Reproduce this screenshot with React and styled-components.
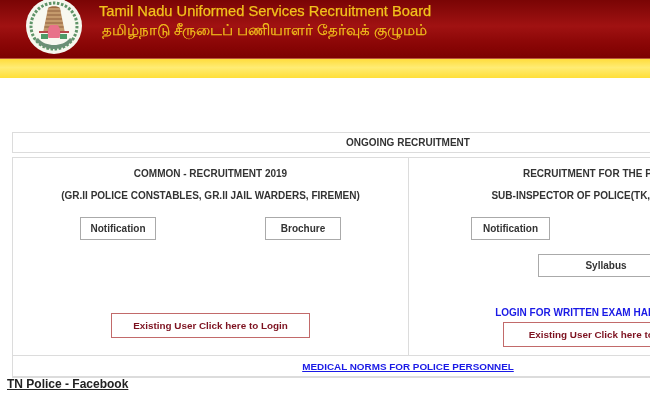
import styled, { createGlobalStyle } from "styled-components";

const GlobalStyle = createGlobalStyle`
  html, body {
    margin: 0;
    padding: 0;
    background: #ffffff;
  }
  body {
    font-family: "Liberation Sans", Arial, sans-serif;
  }
`;

const Page = styled.div`
  width: 650px;
  height: 400px;
  overflow: hidden;
  background: #ffffff;
  filter: blur(0.45px);
`;

const Header = styled.header`
  box-sizing: border-box;
  height: 59px;
  display: flex;
  align-items: flex-start;
  gap: 17px;
  padding-left: 26px;
  border-bottom: 1px solid #b9553a;
  background: linear-gradient(180deg, #7a0505 0%, #a01212 45%, #8e0808 70%, #7c0000 100%);
`;

const HeaderText = styled.div`
  padding-top: 3px;
  color: #f2c21c;
  -webkit-text-stroke: 0.25px #f2c21c;
`;

const BoardName = styled.div`
  font-size: 14.7px;
  line-height: 17px;
  white-space: nowrap;
`;

const BoardNameTamil = styled.div`
  font-size: 14.65px;
  line-height: 20px;
  padding-left: 3px;
  white-space: nowrap;
`;

const YellowBar = styled.div`
  height: 19px;
  background: linear-gradient(180deg, #ffdc3c 0%, #ffec74 45%, #ffdf38 100%);
`;

const Content = styled.main`
  width: 792px;
  margin: 54px 0 0 12px;
`;

const HeadingBox = styled.div`
  height: 19px;
  border: 1px solid #dcdcdc;
  display: flex;
  align-items: center;
  justify-content: center;
  color: #333333;
  font-size: 10px;
  font-weight: bold;
`;

const Panel = styled.div`
  margin-top: 4px;
  border: 1px solid #dcdcdc;
  border-bottom-width: 2px;
`;

const Columns = styled.div`
  display: grid;
  grid-template-columns: 395px 1fr;
  height: 197px;
  border-bottom: 1px solid #dcdcdc;
`;

const Column = styled.section`
  display: flex;
  flex-direction: column;
  align-items: center;
  padding-top: 10px;
  border-left: ${(p) => (p.$divided ? "1px solid #dcdcdc" : "none")};
`;

const ColumnTitle = styled.div`
  color: #333333;
  font-size: 10px;
  font-weight: bold;
  line-height: 12px;
  margin-bottom: 10px;
  margin-right: ${(p) => p.$shift || 0}px;
  white-space: nowrap;
`;

const ButtonRow = styled.div`
  width: 100%;
  box-sizing: border-box;
  display: flex;
  justify-content: space-between;
  padding: ${(p) => p.$padding || "0"};
  margin-top: 5px;
`;

const OutlineButton = styled.a`
  box-sizing: border-box;
  width: ${(p) => p.$width}px;
  height: 23px;
  margin-top: ${(p) => p.$top || 0}px;
  border: 1px solid #aaaaaa;
  display: flex;
  align-items: center;
  justify-content: center;
  color: #333333;
  font-size: 10px;
  font-weight: bold;
`;

const LoginButton = styled.a`
  box-sizing: border-box;
  width: ${(p) => p.$width}px;
  height: 25px;
  margin-top: ${(p) => p.$top}px;
  border: 1px solid #c26a6a;
  display: flex;
  align-items: center;
  justify-content: center;
  color: #7d1220;
  font-size: 9.9px;
  font-weight: bold;
  white-space: nowrap;
`;

const BlueLabel = styled.div`
  margin: 30px 18px 0 0;
  color: #1a1ae6;
  font-size: 10px;
  font-weight: bold;
  line-height: 12px;
  white-space: nowrap;
`;

const FooterRow = styled.div`
  height: 20px;
  display: flex;
  align-items: center;
  justify-content: center;
`;

const BlueLink = styled.a`
  color: #1a1ae6;
  font-size: 9.9px;
  font-weight: bold;
  text-decoration: underline;
`;

const FacebookLink = styled.a`
  display: block;
  margin: 0 0 0 7px;
  color: #222222;
  font-size: 12px;
  font-weight: bold;
  line-height: 13px;
  text-decoration: underline;
`;

function Emblem() {
  return (
    <svg width="56" height="56" viewBox="0 0 56 56">
      <circle cx="28" cy="26" r="28" fill="#f6f7ee" />
      <circle cx="28" cy="26" r="23" fill="none" stroke="#5f9468" strokeWidth="3" strokeDasharray="2.5 1.6" />
      <circle cx="28" cy="26" r="20.5" fill="#f8f8f0" />
      <path d="M22 8h12l5 25H17z" fill="#c49a6c" />
      <path d="M22 8c2-2.500 10-2.500 12 0z" fill="#9d6b42" />
      <path d="M21.500 11h13M21 15h14M20 19h16M19.200 23h17.600M18.400 27h19.200" stroke="#8e5f3c" strokeWidth="1" />
      <path d="M24.500 25c-3 3-3.500 8-2 13h11c1.500-5 1-10-2-13z" fill="#e8728a" />
      <path d="M13 31h9v2h-9zM34 31h9v2h-9z" fill="#b5484a" />
      <path d="M15 34h7v5h-7zM34 34h7v5h-7z" fill="#4f9a68" />
      <path d="M9 40c5 6 12 9 19 9s14-3 19-9l-3-2c-4 5-10 7-16 7s-12-2-16-7z" fill="#6b8f76" />
    </svg>
  );
}

export default function App() {
  return (
    <Page>
      <GlobalStyle />
      <Header>
        <Emblem />
        <HeaderText>
          <BoardName>Tamil Nadu Uniformed Services Recruitment Board</BoardName>
          <BoardNameTamil>தமிழ்நாடு சீருடைப் பணியாளர் தேர்வுக் குழுமம்</BoardNameTamil>
        </HeaderText>
      </Header>
      <YellowBar />
      <Content>
        <HeadingBox>ONGOING RECRUITMENT</HeadingBox>
        <Panel>
          <Columns>
            <Column>
              <ColumnTitle>COMMON - RECRUITMENT 2019</ColumnTitle>
              <ColumnTitle>(GR.II POLICE CONSTABLES, GR.II JAIL WARDERS, FIREMEN)</ColumnTitle>
              <ButtonRow $padding="0 67px">
                <OutlineButton $width={76}>Notification</OutlineButton>
                <OutlineButton $width={76}>Brochure</OutlineButton>
              </ButtonRow>
              <LoginButton $width={199} $top={73}>Existing User Click here to Login</LoginButton>
            </Column>
            <Column $divided>
              <ColumnTitle>RECRUITMENT FOR THE POST OF</ColumnTitle>
              <ColumnTitle $shift={18}>SUB-INSPECTOR OF POLICE(TK, AR &amp; TSP)</ColumnTitle>
              <ButtonRow $padding="0 0 0 62px">
                <OutlineButton $width={79}>Notification</OutlineButton>
              </ButtonRow>
              <OutlineButton $width={136} $top={14}>Syllabus</OutlineButton>
              <BlueLabel>LOGIN FOR WRITTEN EXAM HALL TICKET</BlueLabel>
              <LoginButton $width={206} $top={3}>Existing User Click here to Login</LoginButton>
            </Column>
          </Columns>
          <FooterRow>
            <BlueLink>MEDICAL NORMS FOR POLICE PERSONNEL</BlueLink>
          </FooterRow>
        </Panel>
      </Content>
      <FacebookLink>TN Police - Facebook</FacebookLink>
    </Page>
  );
}
